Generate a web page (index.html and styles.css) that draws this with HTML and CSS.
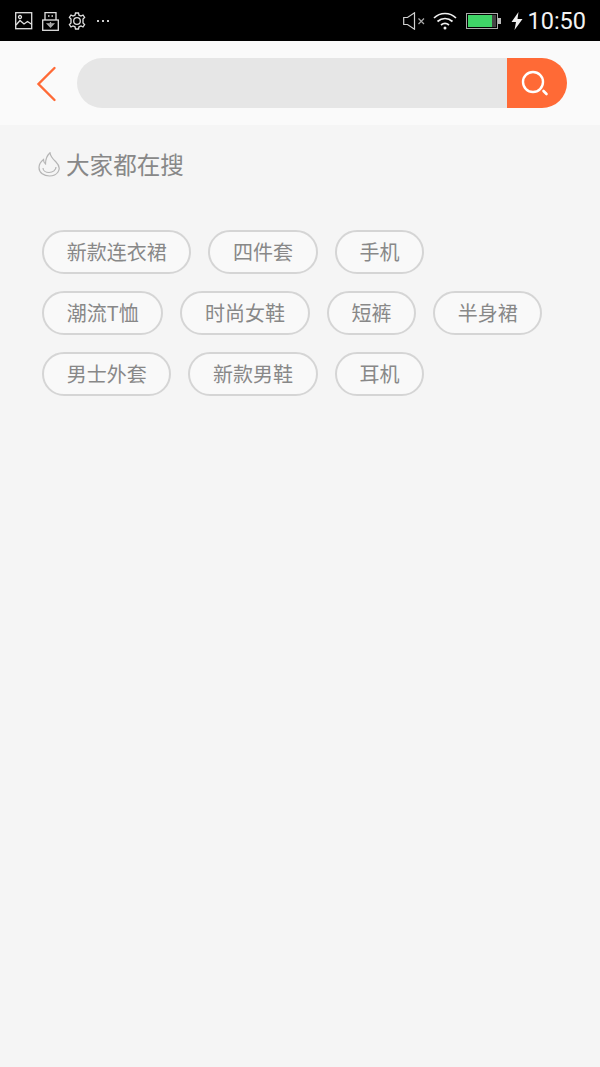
FILE: index.html
```html
<!DOCTYPE html>
<html lang="zh-CN">
<head>
    <meta charset="UTF-8">
    <meta name="viewport" content="width=device-width, initial-scale=1.0">
    <title>搜索</title>
    <link rel="stylesheet" href="styles.css">
</head>
<body>
    <div class="status-bar">
        <div class="status-left">
            <svg width="18" height="18" viewBox="0 0 18 18" fill="none" stroke="#e0e0e0" stroke-width="1.3">
                <rect x="0.7" y="0.7" width="16" height="16"/>
                <circle cx="5" cy="5" r="1.5"/>
                <path d="M1 13 L5 8.5 L9 12 L12.5 9.5 L17 12.5"/>
            </svg>
            <svg class="icon-usb" width="17" height="19" viewBox="0 0 17 19" fill="none" stroke="#e0e0e0" stroke-width="1.3">
                <path d="M3 8 V0.7 H14 V8"/>
                <rect x="0.7" y="8" width="15.6" height="10.3"/>
                <path d="M6 4 H7.5 M9.5 4 H11"/>
                <path d="M8.5 10 V15.5 M5.5 12 H11.5 L8.5 15 Z" stroke="#aaa"/>
            </svg>
            <svg class="icon-gear" width="18" height="18" viewBox="0 0 18 18" fill="none" stroke="#e0e0e0" stroke-width="1.3">
                <circle cx="9" cy="9" r="3.3"/>
                <path d="M7.5 1 H10.5 L11 3.2 L13 4.1 L15 3 L16.6 5.5 L15 7 V11 L16.6 12.5 L15 15 L13 13.9 L11 14.8 L10.5 17 H7.5 L7 14.8 L5 13.9 L3 15 L1.4 12.5 L3 11 V7 L1.4 5.5 L3 3 L5 4.1 L7 3.2 Z"/>
            </svg>
            <div class="dots"><i></i><i></i><i></i></div>
        </div>
        <div class="status-right">
            <svg width="22" height="18" viewBox="0 0 22 18" fill="none" stroke="#d0d0d0" stroke-width="1.2">
                <path d="M0.7 5.5 H4.5 L11.5 0.8 V17.2 L4.5 12.5 H0.7 Z"/>
                <path d="M15.5 6.5 L21 12 M21 6.5 L15.5 12" stroke="#aaa"/>
            </svg>
            <svg class="icon-wifi" width="24" height="18" viewBox="0 0 24 18" fill="none" stroke="#f0f0f0" stroke-width="1.7">
                <path d="M1 6 C7 0 17 0 23 6"/>
                <path d="M4.5 9.5 C9 5.5 15 5.5 19.5 9.5"/>
                <path d="M8 13 C10.5 11 13.5 11 16 13"/>
                <circle cx="12" cy="16" r="1.5" fill="#f0f0f0" stroke="none"/>
            </svg>
            <div class="battery">
                <div class="battery-body">
                    <div class="battery-fill"></div>
                    <div class="battery-empty"></div>
                </div>
                <div class="battery-tip"></div>
            </div>
            <svg class="icon-bolt" width="12" height="18" viewBox="0 0 12 18">
                <path d="M7.5 0 L0.5 10 H5 L3.5 18 L11.5 7 H6.5 Z" fill="#f0f0f0"/>
            </svg>
            <span class="clock">10:50</span>
        </div>
    </div>

    <div class="search-header">
        <svg class="back-icon" width="24" height="38" viewBox="0 0 24 38" fill="none" stroke="#ff6a36" stroke-width="2.4" stroke-linecap="round">
            <path d="M19.5 3 L3.5 19 L19.5 35"/>
        </svg>
        <div class="search-box">
            <div class="search-input"></div>
            <div class="search-button">
                <svg width="36" height="28" viewBox="0 0 36 28" fill="none" stroke="#fff">
                    <circle cx="14" cy="13" r="10" stroke-width="2.4"/>
                    <path d="M24.5 22 L27.5 25" stroke-width="2.6" stroke-linecap="round"/>
                </svg>
            </div>
        </div>
    </div>

    <div class="hot-title">
        <svg width="24" height="25" viewBox="0 0 24 25" fill="none" stroke="#b5b5b5" stroke-width="1.2">
            <path d="M12 0.8 C12.5 5 15 7 18 10 C21.5 13.5 22 17 20 20 C18 23 15 24 11.5 24 C6 24 1 21 1 15.5 C1 12 3 9.5 5.5 7.5 C5.5 9.5 6 11 7.5 12 C7.5 8 9 3.5 12 0.8 Z"/>
            <path d="M5 16 C5 19 8 20.5 11 20.5 C15 20.5 18 18 18 15"/>
        </svg>
        <span>大家都在搜</span>
    </div>

    <div class="tag-list">
        <a class="tag">新款连衣裙</a>
        <a class="tag">四件套</a>
        <a class="tag">手机</a>
        <a class="tag">潮流T恤</a>
        <a class="tag">时尚女鞋</a>
        <a class="tag">短裤</a>
        <a class="tag">半身裙</a>
        <a class="tag">男士外套</a>
        <a class="tag">新款男鞋</a>
        <a class="tag">耳机</a>
    </div>
</body>
</html>
```

FILE: styles.css
```css
body {
    margin: 0;
    min-height: 1067px;
    background-color: #f5f5f5;
    font-family: "Noto Sans CJK SC", "Liberation Sans", sans-serif;
    color: #888;
}
.status-bar {
    height: 41px;
    box-sizing: border-box;
    padding: 1px 14px 0 15px;
    background-color: #000;
    display: flex;
    justify-content: space-between;
    align-items: center;
}
.status-left, .status-right {
    display: flex;
    align-items: center;
}
.icon-usb {
    margin-left: 9px;
}
.icon-gear {
    margin-left: 9px;
}
.dots {
    display: flex;
    gap: 3px;
    margin-left: 11px;
}
.dots i {
    width: 2px;
    height: 2px;
    background-color: #ccc;
}
.icon-wifi {
    margin-left: 8px;
}
.battery {
    display: flex;
    align-items: center;
    margin-left: 9px;
}
.battery-body {
    width: 32px;
    height: 16px;
    box-sizing: border-box;
    border: 1px solid #aaa;
    padding: 1px;
    display: flex;
}
.battery-fill {
    flex: 1;
    background-color: #3fd467;
}
.battery-empty {
    width: 4px;
    background-color: #444;
}
.battery-tip {
    width: 3px;
    height: 6px;
    background-color: #bbb;
}
.icon-bolt {
    margin-left: 10px;
}
.clock {
    font-family: Roboto, "Liberation Sans", sans-serif;
    font-size: 23.5px;
    color: #f2f2f2;
    margin-left: 4px;
}
.search-header {
    height: 84px;
    background-color: #fafafa;
    display: flex;
    align-items: center;
    padding: 0 33px 0 35px;
}
.back-icon {
    flex: none;
    margin-top: 2px;
}
.search-box {
    flex: 1;
    height: 50px;
    margin-left: 18px;
    display: flex;
    border-radius: 25px;
    overflow: hidden;
}
.search-input {
    flex: 1;
    background-color: #e6e6e6;
}
.search-button {
    width: 60px;
    background-color: #ff6a36;
    display: flex;
    align-items: center;
    justify-content: center;
}
.hot-title {
    display: flex;
    align-items: center;
    padding: 23px 0 0 38px;
    gap: 4px;
    font-size: 23.6px;
    line-height: 32px;
    color: #888;
}
.tag-list {
    display: flex;
    flex-wrap: wrap;
    gap: 17px;
    padding: 50px 40px 0 42px;
}
.tag {
    height: 40px;
    line-height: 40px;
    padding: 0 22.7px;
    border: 2px solid #d5d5d5;
    border-radius: 22px;
    background-color: #f9f9f9;
    font-size: 20px;
    color: #888;
}
```
